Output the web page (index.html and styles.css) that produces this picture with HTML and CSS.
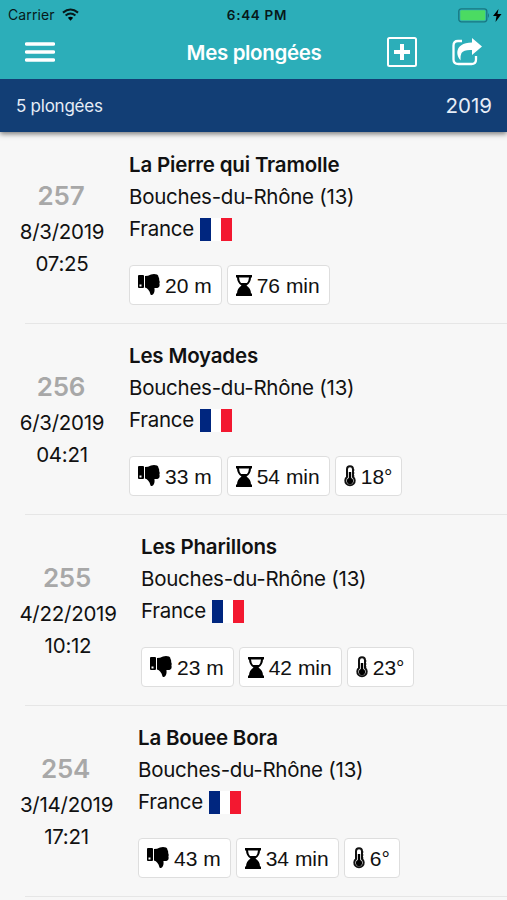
FILE: index.html
```html
<!DOCTYPE html>
<html lang="fr">
  <head>
    <meta charset="utf-8">
    <title>Mes plongées</title>
    <link rel="stylesheet" href="styles.css">
  </head>
  <body>
    <!-- icons used in the list -->
    <svg class="defs">
      <symbol id="thumb" viewBox="0 0 22 22">
        <path fill-rule="evenodd" d="M1 1h4q1 0 1 1v11q0 1-1 1H1q-1 0-1-1V2q0-1 1-1zM1.500 10.500v2h2v-2z" />
        <path d="M7 2q3 0 6-1.500 3-1 6 0 1.500.5 1.500 2.500 1 1.500.6 3 1 1.500.3 3.500 1 4-2 4.500h-3q.5 3-.4 5-1.500 3-3.500 1.500-.6-3.300-2.200-4.800-1.300-1.800-3.300-2.200z" />
      </symbol>
      <symbol id="hourglass" viewBox="0 0 16 21">
        <path fill-rule="evenodd" d="M0 0h16v2.500h-1q0 5-4.500 8 4.500 3 4.500 8h1V21H0v-2.500h1q0-5 4.500-8Q1 7.500 1 2.500H0zM3 2.500q.3 3.500 2 5.500h6q1.700-2 2-5.500z" />
      </symbol>
      <symbol id="thermo" viewBox="0 0 12 22">
        <path d="M3 12V4.200a3 3 0 0 1 6 0V12a4.700 4.700 0 1 1-6 0z" fill="#fff" stroke="#111" stroke-width="2" />
        <path d="M4.800 7h2.400v6a3.200 3.200 0 1 1-2.400 0z" />
        <path d="M8 5h2.500M8 8h2.500M8 11h2.500" stroke="#111" />
      </symbol>
    </svg>

    <header>
      <div class="status">
        <span class="carrier">Carrier</span>
        <svg class="wifi" viewBox="0 0 18 13"><path d="M1 4.500q8-6.500 16 0M3.800 7.500q5.200-4.200 10.400 0" fill="none" stroke="#07191a" stroke-width="2.200" /><path d="M6.200 10q2.800-2.300 5.600 0L9 13z" /></svg>
        <span class="clock">6:44 PM</span>
        <svg class="battery" viewBox="0 0 44 15"><rect x=".8" y=".8" width="28" height="13" rx="2.500" fill="none" stroke="#187780" stroke-width="1.300" /><rect x="2.300" y="2.300" width="25" height="10" rx="1" fill="#4bdb62" /><path d="M30 5q2 2.500 0 5z" fill="#187780" /><path d="M40.500 1l-5.500 7h3.500L37.500 14l6-8h-4z" /></svg>
      </div>
      <div class="navbar">
        <svg class="menu" viewBox="0 0 30 22"><path d="M1.500 3h27M1.500 11h27M1.500 19h27" stroke="#fff" stroke-width="3.500" stroke-linecap="round" /></svg>
        <h1>Mes plongées</h1>
        <svg class="add" viewBox="0 0 30 30"><rect x="1" y="1" width="28" height="28" rx="1.500" fill="none" stroke="#fff" stroke-width="2" /><path d="M15 7v16M7 15h16" stroke="#fff" stroke-width="4" /></svg>
        <svg class="share" viewBox="0 0 30 28"><path d="M10 3H6Q1.500 3 1.500 7.500v14q0 4.500 5 4.500h13q4.500 0 4.500-4.500V18" fill="none" stroke="#fff" stroke-width="2.300" /><path d="M20 0l10 8.500L20 17v-5q-8-.5-10.500 3-1.500 3-1 7.500-3.500-4-3.200-8.500Q6 5 20 4.500z" fill="#fff" /></svg>
      </div>
      <div class="summary">
        <span class="count">5 plongées</span>
        <span class="year">2019</span>
      </div>
    </header>

    <main>
      <div class="dive">
        <div class="when short">
          <span class="num">257</span>
          <span>8/3/2019</span>
          <span>07:25</span>
        </div>
        <div class="info">
          <h2>La Pierre qui Tramolle</h2>
          <p>Bouches-du-Rhône (13)</p>
          <p class="country">France <span class="flag"></span></p>
          <div class="tags">
            <span class="tag"><svg class="thumb"><use href="#thumb" /></svg>20 m</span>
            <span class="tag"><svg class="hourglass"><use href="#hourglass" /></svg>76 min</span>
          </div>
        </div>
      </div>
      <div class="dive">
        <div class="when short">
          <span class="num">256</span>
          <span>6/3/2019</span>
          <span>04:21</span>
        </div>
        <div class="info">
          <h2>Les Moyades</h2>
          <p>Bouches-du-Rhône (13)</p>
          <p class="country">France <span class="flag"></span></p>
          <div class="tags">
            <span class="tag"><svg class="thumb"><use href="#thumb" /></svg>33 m</span>
            <span class="tag"><svg class="hourglass"><use href="#hourglass" /></svg>54 min</span>
            <span class="tag"><svg class="thermo"><use href="#thermo" /></svg>18°</span>
          </div>
        </div>
      </div>
      <div class="dive">
        <div class="when long">
          <span class="num">255</span>
          <span>4/22/2019</span>
          <span>10:12</span>
        </div>
        <div class="info">
          <h2>Les Pharillons</h2>
          <p>Bouches-du-Rhône (13)</p>
          <p class="country">France <span class="flag"></span></p>
          <div class="tags">
            <span class="tag"><svg class="thumb"><use href="#thumb" /></svg>23 m</span>
            <span class="tag"><svg class="hourglass"><use href="#hourglass" /></svg>42 min</span>
            <span class="tag"><svg class="thermo"><use href="#thermo" /></svg>23°</span>
          </div>
        </div>
      </div>
      <div class="dive">
        <div class="when medium">
          <span class="num">254</span>
          <span>3/14/2019</span>
          <span>17:21</span>
        </div>
        <div class="info">
          <h2>La Bouee Bora</h2>
          <p>Bouches-du-Rhône (13)</p>
          <p class="country">France <span class="flag"></span></p>
          <div class="tags">
            <span class="tag"><svg class="thumb"><use href="#thumb" /></svg>43 m</span>
            <span class="tag"><svg class="hourglass"><use href="#hourglass" /></svg>34 min</span>
            <span class="tag"><svg class="thermo"><use href="#thermo" /></svg>6°</span>
          </div>
        </div>
      </div>
    </main>
  </body>
</html>
```
FILE: styles.css
```css
* {
  box-sizing: border-box;
}
body {
  margin: 0;
  height: 900px;
  overflow: hidden;
  background: #f7f7f7;
  color: #111;
  font: 20.5px/32px Inter, sans-serif;
  letter-spacing: -0.25px;
}
svg {
  display: block;
  flex: none;
}
.defs {
  display: none;
}
h1, h2, p {
  margin: 0;
}
/* status bar */
header {
  background: #2caeb9;
  box-shadow: 0 2px 5px rgba(0, 0, 0, 0.5);
}
.status {
  display: grid;
  grid-template-columns: 54px 1fr auto 1fr 44px;
  align-items: center;
  height: 27px;
  padding: 0 5px 5px 8px;
  color: #07191a;
  font-size: 14px;
  line-height: 22px;
}
.carrier {
  letter-spacing: 0.1px;
}
.wifi {
  width: 17px;
  height: 13px;
  margin-top: 3px;
}
.clock {
  margin: 3px 3px 0 -3px;
  font-size: 13.5px;
  font-weight: 600;
  letter-spacing: 0.7px;
}
.carrier,
.battery {
  margin-top: 4px;
}
.battery {
  grid-column: 5;
  width: 44px;
  height: 15px;
}
/* title bar */
.navbar {
  display: flex;
  align-items: center;
  height: 52px;
  padding: 0 25px;
  color: #fff;
}
.menu {
  width: 30px;
  height: 22px;
  margin-top: -2px;
}
h1 {
  flex: 1;
  padding-left: 66px;
  text-align: center;
  font-size: 20.5px;
  font-weight: 600;
  letter-spacing: -0.35px;
}
.add {
  width: 30px;
  height: 30px;
  margin: -2px 35px 0 0;
}
.share {
  width: 30px;
  height: 28px;
  margin-top: -2px;
}
.summary {
  display: flex;
  align-items: center;
  justify-content: space-between;
  height: 53px;
  padding: 0 15px 0 16px;
  background: #123e75;
  color: #e6edf7;
}
.count {
  font-size: 17px;
}
.year {
  letter-spacing: 0;
}
/* list of dives */
main {
  padding-top: 1px;
}
.dive {
  display: flex;
  height: 191px;
  padding: 16px 0 0 20px;
  background: linear-gradient(#e6e6e6, #e6e6e6) 25px 100% / 100% 1px no-repeat;
}
.when {
  display: flex;
  flex-direction: column;
  align-items: center;
  padding-top: 31px;
  margin-right: 25px;
  white-space: nowrap;
}
.short {
  width: 84px;
}
.medium {
  width: 93px;
}
.long {
  width: 96px;
}
.num {
  margin: 0 2px 4px 0;
  color: #a8a8a8;
  font-size: 26px;
  font-weight: 600;
}
h2 {
  font-size: 20.5px;
  font-weight: 600;
  letter-spacing: -0.18px;
}
.country {
  display: flex;
  align-items: center;
  gap: 6px;
}
.flag {
  width: 32px;
  height: 23px;
  background: linear-gradient(90deg, #00267f 33.3%, #fff 33.3% 66.6%, #f31830 66.6%);
}
.tags {
  display: flex;
  gap: 5px;
  margin-top: 20px;
}
.tag {
  display: flex;
  align-items: center;
  height: 40px;
  padding: 1px 9px 0 8px;
  border: 1.5px solid #dedede;
  border-radius: 4px;
  background: #fff;
  font-family: "Liberation Sans", sans-serif;
  font-size: 21px;
  letter-spacing: 0;
  white-space: nowrap;
}
.thumb {
  width: 22px;
  height: 22px;
  margin: -1px 5px 0 0;
}
.hourglass {
  width: 16px;
  height: 21px;
  margin: -1px 5px 0 0;
}
.thermo {
  width: 12px;
  height: 22px;
  margin: -1px 5px 0 0;
}
```
